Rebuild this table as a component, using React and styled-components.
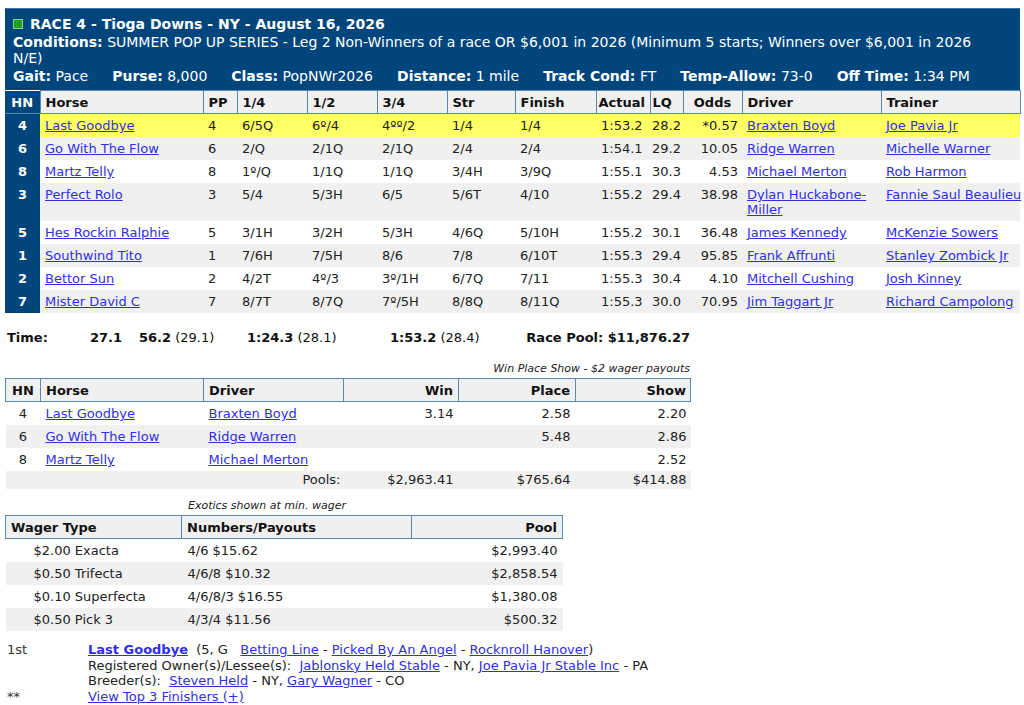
import React from 'react';
import styled, { createGlobalStyle } from 'styled-components';

const BLUE = '#00467c';
const LINE = '#5a87b1';
const LINK = '#2f2fe3';

const runners = [
  { hn: 4, horse: 'Last Goodbye', pp: 4, q1: '6/5Q', q2: '6º/4', q3: '4ºº/2', str: '1/4', fin: '1/4', actual: '1:53.2', lq: '28.2', odds: '*0.57', driver: 'Braxten Boyd', trainer: 'Joe Pavia Jr' },
  { hn: 6, horse: 'Go With The Flow', pp: 6, q1: '2/Q', q2: '2/1Q', q3: '2/1Q', str: '2/4', fin: '2/4', actual: '1:54.1', lq: '29.2', odds: '10.05', driver: 'Ridge Warren', trainer: 'Michelle Warner' },
  { hn: 8, horse: 'Martz Telly', pp: 8, q1: '1º/Q', q2: '1/1Q', q3: '1/1Q', str: '3/4H', fin: '3/9Q', actual: '1:55.1', lq: '30.3', odds: '4.53', driver: 'Michael Merton', trainer: 'Rob Harmon' },
  { hn: 3, horse: 'Perfect Rolo', pp: 3, q1: '5/4', q2: '5/3H', q3: '6/5', str: '5/6T', fin: '4/10', actual: '1:55.2', lq: '29.4', odds: '38.98', driver: 'Dylan Huckabone-Miller', trainer: 'Fannie Saul Beaulieu' },
  { hn: 5, horse: 'Hes Rockin Ralphie', pp: 5, q1: '3/1H', q2: '3/2H', q3: '5/3H', str: '4/6Q', fin: '5/10H', actual: '1:55.2', lq: '30.1', odds: '36.48', driver: 'James Kennedy', trainer: 'McKenzie Sowers' },
  { hn: 1, horse: 'Southwind Tito', pp: 1, q1: '7/6H', q2: '7/5H', q3: '8/6', str: '7/8', fin: '6/10T', actual: '1:55.3', lq: '29.4', odds: '95.85', driver: 'Frank Affrunti', trainer: 'Stanley Zombick Jr' },
  { hn: 2, horse: 'Bettor Sun', pp: 2, q1: '4/2T', q2: '4º/3', q3: '3º/1H', str: '6/7Q', fin: '7/11', actual: '1:55.3', lq: '30.4', odds: '4.10', driver: 'Mitchell Cushing', trainer: 'Josh Kinney' },
  { hn: 7, horse: 'Mister David C', pp: 7, q1: '8/7T', q2: '8/7Q', q3: '7º/5H', str: '8/8Q', fin: '8/11Q', actual: '1:55.3', lq: '30.0', odds: '70.95', driver: 'Jim Taggart Jr', trainer: 'Richard Campolong' },
];

const payouts = [
  { hn: 4, horse: 'Last Goodbye', driver: 'Braxten Boyd', win: '3.14', place: '2.58', show: '2.20' },
  { hn: 6, horse: 'Go With The Flow', driver: 'Ridge Warren', win: '', place: '5.48', show: '2.86' },
  { hn: 8, horse: 'Martz Telly', driver: 'Michael Merton', win: '', place: '', show: '2.52' },
];

const exotics = [
  { type: '$2.00 Exacta', nums: '4/6 $15.62', pool: '$2,993.40' },
  { type: '$0.50 Trifecta', nums: '4/6/8 $10.32', pool: '$2,858.54' },
  { type: '$0.10 Superfecta', nums: '4/6/8/3 $16.55', pool: '$1,380.08' },
  { type: '$0.50 Pick 3', nums: '4/3/4 $11.56', pool: '$500.32' },
];

const meta = [
  ['Gait:', 'Pace'],
  ['Purse:', '8,000'],
  ['Class:', 'PopNWr2026'],
  ['Distance:', '1 mile'],
  ['Track Cond:', 'FT'],
  ['Temp-Allow:', '73-0'],
  ['Off Time:', '1:34 PM'],
];

function App() {
  return (
    <Page>
      <GlobalStyle />
      <RaceBox>
        <BoxHeader>
          <Title>
            <StatusSquare />
            RACE 4 - Tioga Downs - NY - August 16, 2026
          </Title>
          <Conditions>
            <b>Conditions:</b> SUMMER POP UP SERIES - Leg 2 Non-Winners of a race OR $6,001 in 2026 (Minimum 5 starts; Winners over $6,001 in 2026
            <br />
            N/E)
          </Conditions>
          <MetaRow>
            {meta.map(([k, v]) => (
              <span key={k}>
                <b>{k}</b> {v}
              </span>
            ))}
          </MetaRow>
        </BoxHeader>

        <Table>
          <colgroup>
            {[35, 163, 34, 70, 70, 70, 68, 81, 54, 33, 59, 139, 139].map((w, i) => (
              <col key={i} style={{ width: w }} />
            ))}
          </colgroup>
          <thead>
            <tr>
              <HnHead>HN</HnHead>
              <HeadCell>Horse</HeadCell>
              <HeadCell>PP</HeadCell>
              <HeadCell>1/4</HeadCell>
              <HeadCell>1/2</HeadCell>
              <HeadCell>3/4</HeadCell>
              <HeadCell>Str</HeadCell>
              <HeadCell>Finish</HeadCell>
              <HeadCell $pad="4px 2px 3px">Actual</HeadCell>
              <HeadCell $pad="4px 2px 3px">LQ</HeadCell>
              <HeadCell $align="center">Odds</HeadCell>
              <HeadCell>Driver</HeadCell>
              <HeadCell>Trainer</HeadCell>
            </tr>
          </thead>
          <tbody>
            {runners.map((r, i) => (
              <Row key={r.hn} $tone={i === 0 ? 'win' : i % 2 ? 'gray' : 'white'}>
                <HnCell>{r.hn}</HnCell>
                <Cell><Link href="#">{r.horse}</Link></Cell>
                <Cell>{r.pp}</Cell>
                <Cell>{r.q1}</Cell>
                <Cell>{r.q2}</Cell>
                <Cell>{r.q3}</Cell>
                <Cell>{r.str}</Cell>
                <Cell>{r.fin}</Cell>
                <Cell $pad="4px 2px 4px 5px">{r.actual}</Cell>
                <Cell $pad="4px 2px">{r.lq}</Cell>
                <Cell $align="right" $pad="4px 4px">{r.odds}</Cell>
                <Cell><Link href="#">{r.driver}</Link></Cell>
                <Cell $nowrap><Link href="#">{r.trainer}</Link></Cell>
              </Row>
            ))}
          </tbody>
        </Table>
      </RaceBox>

      <TimeRow>
        <b>Time:</b>
        <b>27.1</b>
        <span><b>56.2</b> (29.1)</span>
        <span><b>1:24.3</b> (28.1)</span>
        <span><b>1:53.2</b> (28.4)</span>
        <PoolTotal>Race Pool: $11,876.27</PoolTotal>
      </TimeRow>

      <Caption $width="685px" $align="right" $top="16px">
        Win Place Show - $2 wager payouts
      </Caption>
      <Table $width="685px">
        <colgroup>
          {[35, 163, 140, 115, 117, 115].map((w, i) => (
            <col key={i} style={{ width: w }} />
          ))}
        </colgroup>
        <thead>
          <tr>
            <HeadCell $align="center">HN</HeadCell>
            <HeadCell>Horse</HeadCell>
            <HeadCell>Driver</HeadCell>
            <HeadCell $align="right">Win</HeadCell>
            <HeadCell $align="right">Place</HeadCell>
            <HeadCell $align="right" $pad="4px 4px 3px">Show</HeadCell>
          </tr>
        </thead>
        <tbody>
          {payouts.map((p, i) => (
            <Row key={p.hn} $tone={i % 2 ? 'gray' : 'white'}>
              <Cell $align="center">{p.hn}</Cell>
              <Cell><Link href="#">{p.horse}</Link></Cell>
              <Cell><Link href="#">{p.driver}</Link></Cell>
              <Cell $align="right">{p.win}</Cell>
              <Cell $align="right">{p.place}</Cell>
              <Cell $align="right" $pad="4px 4px">{p.show}</Cell>
            </Row>
          ))}
          <Row $tone="gray">
            <Cell $pad="1px 5px 2px" />
            <Cell $pad="1px 5px 2px" />
            <Cell $align="right" $pad="1px 3px 2px">Pools:</Cell>
            <Cell $align="right" $pad="1px 5px 2px">$2,963.41</Cell>
            <Cell $align="right" $pad="1px 5px 2px">$765.64</Cell>
            <Cell $align="right" $pad="1px 4px 2px">$414.88</Cell>
          </Row>
        </tbody>
      </Table>

      <ExoticCaptionRow>
        <span />
        <Caption>Exotics shown at min. wager</Caption>
      </ExoticCaptionRow>
      <Table $width="557px">
        <colgroup>
          {[176, 230, 151].map((w, i) => (
            <col key={i} style={{ width: w }} />
          ))}
        </colgroup>
        <thead>
          <tr>
            <HeadCell>Wager Type</HeadCell>
            <HeadCell>Numbers/Payouts</HeadCell>
            <HeadCell $align="right">Pool</HeadCell>
          </tr>
        </thead>
        <tbody>
          {exotics.map((e, i) => (
            <Row key={e.type} $tone={i % 2 ? 'gray' : 'white'}>
              <Cell $pad="4px 5px 4px 28px">{e.type}</Cell>
              <Cell $pad="4px 6px">{e.nums}</Cell>
              <Cell $align="right">{e.pool}</Cell>
            </Row>
          ))}
        </tbody>
      </Table>

      <Finishers>
        <span>1st</span>
        <div>
          <BoldLink href="#">Last Goodbye</BoldLink>&nbsp;&nbsp;(5, G&nbsp;&nbsp;&nbsp;
          <Link href="#">Betting Line</Link> - <Link href="#">Picked By An Angel</Link> -{' '}
          <Link href="#">Rocknroll Hanover</Link>)
          <br />
          Registered Owner(s)/Lessee(s):&nbsp;&nbsp;<Link href="#">Jablonsky Held Stable</Link> - NY,{' '}
          <Link href="#">Joe Pavia Jr Stable Inc</Link> - PA
          <br />
          Breeder(s):&nbsp;&nbsp;<Link href="#">Steven Held</Link> - NY, <Link href="#">Gary Wagner</Link> - CO
        </div>
        <span>**</span>
        <div>
          <Link href="#">View Top 3 Finishers (+)</Link>
        </div>
      </Finishers>
    </Page>
  );
}

const GlobalStyle = createGlobalStyle`
  body {
    margin: 0;
    background: #fff;
    color: #222;
    font-family: "DejaVu Sans", Verdana, sans-serif;
    font-size: 13px;
  }
`;

const Page = styled.div`
  padding: 8px 4px 0 5px;
`;

const RaceBox = styled.div`
  background: ${BLUE};
  border-top: 1px solid #3f74a6;
  color: #fff;
`;

const BoxHeader = styled.div`
  padding: 6px 8px 6px 8px;
  font-size: 14px;
`;

const Title = styled.div`
  display: flex;
  align-items: center;
  gap: 7px;
  font-weight: bold;
  font-size: 14px;
  line-height: 18px;
`;

const StatusSquare = styled.span`
  width: 8px;
  height: 8px;
  background: #1e9e1e;
  border: 1px solid #8fd08f;
`;

const Conditions = styled.div`
  margin-top: 1px;
  line-height: 16px;
  white-space: nowrap;
`;

const MetaRow = styled.div`
  display: flex;
  gap: 24px;
  margin-top: 2px;
  line-height: 16px;
`;

const Table = styled.table`
  width: ${(p) => p.$width || '100%'};
  table-layout: fixed;
  border-collapse: collapse;
  color: #222;
  background: #fff;
`;

const HeadCell = styled.th`
  background: #f0f0f0;
  border: 1px solid ${LINE};
  padding: ${(p) => p.$pad || '4px 5px 3px'};
  line-height: 15px;
  text-align: ${(p) => p.$align || 'left'};
  font-weight: bold;
  color: #111;
  white-space: nowrap;
`;

const HnHead = styled.th`
  background: ${BLUE};
  color: #fff;
  padding: 4px 2px 3px;
  line-height: 15px;
  text-align: center;
  border-bottom: 1px solid ${LINE};
`;

const tones = { win: '#ffff66', gray: '#f0f0f0', white: '#fff' };

const Row = styled.tr`
  background: ${(p) => tones[p.$tone]};
`;

const Cell = styled.td`
  padding: ${(p) => p.$pad || '4px 5px'};
  line-height: 15px;
  vertical-align: top;
  text-align: ${(p) => p.$align || 'left'};
  white-space: ${(p) => (p.$nowrap ? 'nowrap' : 'normal')};
`;

const HnCell = styled.td`
  background: ${BLUE};
  color: #fff;
  font-weight: bold;
  text-align: center;
  vertical-align: top;
  padding: 4px 2px;
  line-height: 15px;
`;

const Link = styled.a`
  color: ${LINK};
  text-decoration: underline;
`;

const BoldLink = styled(Link)`
  font-weight: bold;
`;

const TimeRow = styled.div`
  display: grid;
  grid-template-columns: 83px 49px 108px 143px 1fr auto;
  width: 683px;
  margin-top: 17px;
  padding-left: 2px;
  line-height: 16px;
  color: #111;
`;

const PoolTotal = styled.b`
  text-align: right;
`;

const Caption = styled.div`
  width: ${(p) => p.$width || 'auto'};
  margin-top: ${(p) => p.$top || '0'};
  margin-bottom: 2px;
  text-align: ${(p) => p.$align || 'left'};
  font-style: italic;
  font-size: 11px;
  line-height: 14px;
  color: #222;
`;

const ExoticCaptionRow = styled.div`
  display: grid;
  grid-template-columns: 183px 1fr;
  margin-top: 10px;
`;

const Finishers = styled.div`
  display: grid;
  grid-template-columns: 81px 1fr;
  margin-top: 11px;
  padding-left: 2px;
  line-height: 15.7px;
  color: #222;

  & > span {
    color: #333;
  }
`;

export default App;
